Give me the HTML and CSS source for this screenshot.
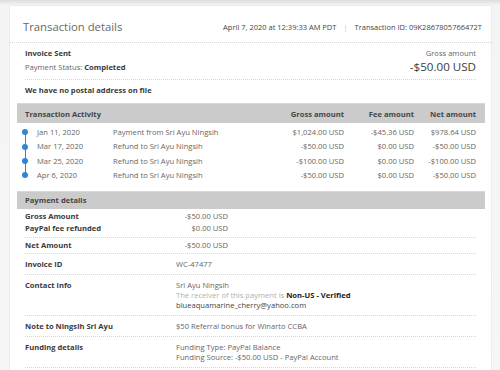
FILE: index.html
```html
<!DOCTYPE html>
<html lang="en">
<head>
<meta charset="utf-8">
<title>Transaction details</title>
<link rel="stylesheet" href="styles.css">
</head>
<body>
<div class="card">
  <header class="head">
    <h1 class="title">Transaction details</h1>
    <div class="meta"><span>April 7, 2020 at 12:39:33 AM PDT</span><span class="sep">|</span><span>Transaction ID: 09K2867805766472T</span></div>
  </header>
  <div class="content">
    <div class="summary">
      <div class="sum-left">
        <div class="strong">Invoice Sent</div>
        <div class="muted">Payment Status: <b class="strong">Completed</b></div>
      </div>
      <div class="sum-right">
        <div class="muted">Gross amount</div>
        <div class="big">-$50.00 USD</div>
      </div>
    </div>
    <div class="postal strong">We have no postal address on file</div>

    <div class="bar bar-activity">
      <span>Transaction Activity</span>
      <span class="r">Gross amount</span>
      <span class="r">Fee amount</span>
      <span class="r">Net amount</span>
    </div>
    <div class="activity">
      <div class="arow first"><span class="tl"></span><span>Jan 11, 2020</span><span>Payment from Sri Ayu Ningsih</span><span class="r">$1,024.00 USD</span><span class="r">-$45.36 USD</span><span class="r">$978.64 USD</span></div>
      <div class="arow"><span class="tl"></span><span>Mar 17, 2020</span><span>Refund to Sri Ayu Ningsih</span><span class="r">-$50.00 USD</span><span class="r">$0.00 USD</span><span class="r">-$50.00 USD</span></div>
      <div class="arow"><span class="tl"></span><span>Mar 25, 2020</span><span>Refund to Sri Ayu Ningsih</span><span class="r">-$100.00 USD</span><span class="r">$0.00 USD</span><span class="r">-$100.00 USD</span></div>
      <div class="arow last"><span class="tl"></span><span>Apr 6, 2020</span><span>Refund to Sri Ayu Ningsih</span><span class="r">-$50.00 USD</span><span class="r">$0.00 USD</span><span class="r">-$50.00 USD</span></div>
    </div>

    <div class="bar bar-details"><span>Payment details</span></div>
    <div class="details">
      <div class="block amounts">
        <div class="drow"><span class="strong">Gross Amount</span><span class="amt">-$50.00 USD</span></div>
        <div class="drow"><span class="strong">PayPal fee refunded</span><span class="amt">$0.00 USD</span></div>
      </div>
      <div class="block amounts net">
        <div class="drow"><span class="strong">Net Amount</span><span class="amt">-$50.00 USD</span></div>
      </div>
      <div class="block">
        <div class="drow"><span class="strong">Invoice ID</span><span class="val">WC-47477</span></div>
      </div>
      <div class="block">
        <div class="drow"><span class="strong">Contact info</span>
          <div class="val">
            <div>Sri Ayu Ningsih</div>
            <div class="faint">The receiver of this payment is <b class="black">Non-US - Verified</b></div>
            <div class="dark">blueaquamarine_cherry@yahoo.com</div>
          </div>
        </div>
      </div>
      <div class="block">
        <div class="drow"><span class="strong">Note to Ningsih Sri Ayu</span><span class="val">$50 Referral bonus for Winarto CCBA</span></div>
      </div>
      <div class="block">
        <div class="drow"><span class="strong">Funding details</span>
          <div class="val">
            <div>Funding Type: PayPal Balance</div>
            <div>Funding Source: -$50.00 USD - PayPal Account</div>
          </div>
        </div>
      </div>
    </div>
  </div>
</div>
</body>
</html>
```

FILE: styles.css
```css
* { box-sizing: border-box; }

html, body {
  margin: 0;
  padding: 0;
}

body {
  background: linear-gradient(#dcdcdc 0, #f4f4f4 5px, #f6f6f6 100%);
  font-family: "Open Sans", "Noto Sans", sans-serif;
  font-size: 7.6px;
  color: #666;
  padding: 5px 8px 0 9px;
  height: 370px;
  overflow: hidden;
}

.card {
  background: #fff;
  border: 1px solid #ececec;
  border-bottom: none;
  height: 365px;
  overflow: hidden;
}

.head {
  display: flex;
  align-items: center;
  justify-content: space-between;
  padding: 14px 9px 8px 13px;
  border-bottom: 1px dotted #d6d6d6;
}

.title {
  margin: 0;
  font-size: 11.3px;
  line-height: 14px;
  font-weight: 400;
  color: #6a6a6a;
}

.meta {
  display: flex;
  align-items: center;
  gap: 5px;
  color: #444;
  font-size: 7.5px;
  line-height: 14px;
}

.meta .sep {
  color: #c8c8c8;
  padding: 0 2px;
}

.content {
  padding: 0 6px 0 7px;
}

.strong {
  font-weight: 700;
  color: #3a3a3a;
}

.muted { color: #666; }

.summary {
  display: flex;
  justify-content: space-between;
  padding: 3px 0 5px;
  margin: 0 9px 0 8px;
  line-height: 14px;
  border-bottom: 1px dotted #d6d6d6;
}

.sum-right {
  text-align: right;
}

.big {
  font-size: 11.6px;
  color: #3c3c3c;
}

.postal {
  padding: 3px 8px 0;
  line-height: 14px;
  margin-bottom: 6px;
}

.bar {
  background: #cbcbcb;
  border-top: 1px solid #d8d8d8;
  font-weight: 700;
  color: #464646;
  display: grid;
  align-items: center;
  padding: 0 9px 0 8px;
}

.bar-activity {
  height: 20px;
  grid-template-columns: 1fr 70px 70px 62px;
}

.bar-details {
  height: 18px;
}

.r { text-align: right; }

.activity {
  padding: 2px 9px 0 2px;
  margin-bottom: 8px;
}

.arow {
  display: grid;
  grid-template-columns: 18px 76px 1fr 70px 70px 62px;
  line-height: 14.4px;
  color: #666;
}

.tl {
  position: relative;
}

.tl::before {
  content: "";
  position: absolute;
  left: 5.5px;
  width: 1.2px;
  top: 0;
  bottom: 0;
  background: #2f86d6;
}

.arow.first .tl::before { top: 50%; }
.arow.last .tl::before { bottom: 50%; }

.tl::after {
  content: "";
  position: absolute;
  left: 3px;
  top: 50%;
  width: 6px;
  height: 6px;
  margin-top: -3px;
  border-radius: 50%;
  background: #2f86d6;
}

.details {
  padding: 0 9px 0 8px;
}

.block {
  border-bottom: 1px dotted #d6d6d6;
  padding: 5px 0;
  line-height: 10px;
}

.block.amounts {
  padding: 1px 0 3px;
  line-height: 12px;
}

.block.amounts.net {
  padding: 1px 0 2px;
}

.drow {
  display: grid;
  grid-template-columns: 151px 1fr;
}

.amt {
  width: 52px;
  text-align: right;
  color: #666;
}

.val { color: #666; }

.faint { color: #b0b0b0; }

.black {
  color: #222;
  font-weight: 700;
}

.dark { color: #444; }
```
